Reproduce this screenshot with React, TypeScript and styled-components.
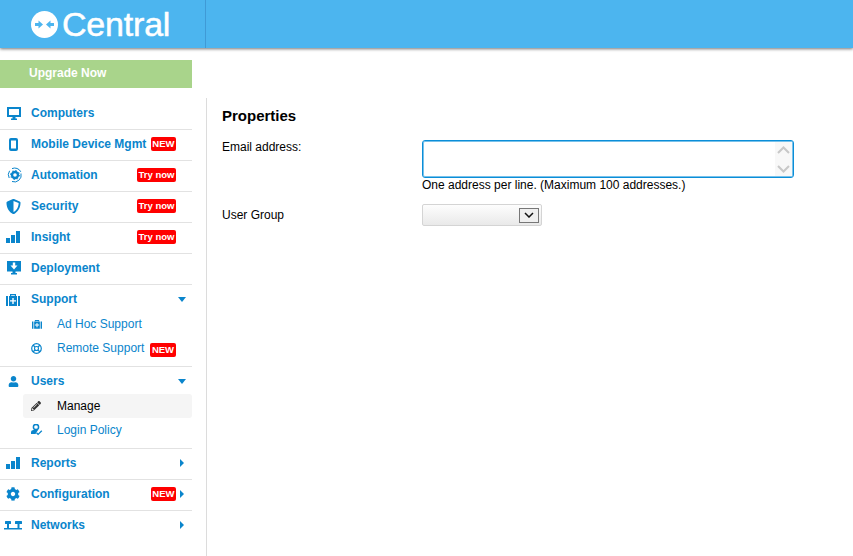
import React from "react";
import styled, { createGlobalStyle } from "styled-components";
import { FaCog, FaPencilAlt, FaShieldAlt, FaUser } from "react-icons/fa";

const GlobalStyle = createGlobalStyle`
  html, body {
    margin: 0;
    padding: 0;
    background: #fff;
    overflow: hidden;
  }
  body {
    font-family: "Liberation Sans", Arial, sans-serif;
    font-size: 12px;
    color: #000;
  }
  * { box-sizing: border-box; }
`;

const BLUE = "#0a85cc";

const Page = styled.div`
  width: 853px;
  height: 556px;
  display: flex;
  flex-direction: column;
  overflow: hidden;
`;

const Header = styled.header`
  height: 48px;
  flex: none;
  background: #4cb5ef;
  box-shadow: 0 1px 3px rgba(0, 0, 0, 0.55);
  display: flex;
  position: relative;
`;

const LogoCell = styled.div`
  width: 206px;
  height: 100%;
  border-right: 1px solid #3f9ad6;
  display: flex;
  align-items: center;
  padding-left: 31px;
  gap: 4px;
`;

const LogoText = styled.span`
  font-size: 34px;
  color: #fff;
  letter-spacing: -0.2px;
  line-height: 48px;
  -webkit-text-stroke: 0.5px #fff;
`;

const Body = styled.div`
  flex: 1;
  display: grid;
  grid-template-columns: 206px 1fr;
  grid-template-rows: auto 1fr;
  min-height: 0;
`;

const Upgrade = styled.div`
  grid-column: 1 / 3;
  margin-top: 12px;
  width: 192px;
  height: 28px;
  background: #a9d48b;
  color: #fff;
  font-weight: bold;
  line-height: 27px;
  padding-left: 29px;
`;

const Sidebar = styled.nav`
  margin-top: 11px;
  width: 192px;
`;

const Group = styled.div`
  border-bottom: 1px solid #e2e2e2;
  &:last-child { border-bottom: none; }
`;

const Row = styled.div`
  height: 30px;
  display: flex;
  align-items: center;
  padding: 0 0 2px 5px;
`;

const IconSlot = styled.span`
  width: 26px;
  height: 16px;
  flex: none;
  display: flex;
  align-items: center;
  color: ${BLUE};
`;

const Label = styled.span`
  font-weight: bold;
  color: ${BLUE};
  flex: 1;
  white-space: nowrap;
`;

const SubList = styled.div`
  margin-top: -3px;
  padding-bottom: 6px;
`;

const SubRow = styled.div<{ $active?: boolean }>`
  height: 24px;
  margin-left: 23px;
  display: flex;
  align-items: center;
  padding-left: 7px;
  border-radius: 3px;
  background: ${({ $active }) => ($active ? "#f5f5f5" : "transparent")};
`;

const SubIcon = styled.span<{ $active?: boolean }>`
  width: 27px;
  height: 14px;
  flex: none;
  display: flex;
  align-items: center;
  color: ${({ $active }) => ($active ? "#333" : BLUE)};
`;

const SubLabel = styled.span<{ $active?: boolean }>`
  color: ${({ $active }) => ($active ? "#000" : BLUE)};
  white-space: nowrap;
`;

const Badge = styled.span`
  height: 14px;
  background: #f00;
  color: #fff;
  font-size: 9.5px;
  font-weight: bold;
  line-height: 14px;
  padding: 0 1.5px;
  border-radius: 2px;
  flex: none;
  white-space: nowrap;
`;

const SubBadge = styled(Badge)`
  margin-left: 6px;
  margin-top: 3px;
`;

const Tail = styled.span`
  display: flex;
  align-items: center;
  flex: none;
`;

const CaretSlot = styled.span`
  width: 16px;
  display: flex;
  justify-content: center;
  flex: none;
  color: ${BLUE};
  padding-right: 4px;
`;

const Main = styled.main`
  margin-top: 10px;
  border-left: 1px solid #dcdcdc;
  padding: 9px 0 0 15px;
`;

const Title = styled.h2`
  margin: 0;
  font-size: 15px;
  line-height: 17px;
  font-weight: bold;
`;

const FormGrid = styled.div`
  margin-top: 16px;
  display: grid;
  grid-template-columns: 200px 372px;
  grid-template-rows: auto auto;
  row-gap: 12px;
`;

const FieldLabel = styled.label<{ $top: number }>`
  padding-top: ${({ $top }) => $top}px;
  line-height: 14px;
`;

const MailBox = styled.div`
  height: 38px;
  border: 1px solid #0a8ed8;
  box-shadow: inset 0 0 0 1px rgba(10, 142, 216, 0.55);
  border-radius: 3px;
  display: flex;
  background: #fff;
  padding: 1px;
`;

const MailInput = styled.textarea`
  flex: 1;
  border: none;
  outline: none;
  resize: none;
  overflow: hidden;
  background: transparent;
`;

const FakeScroll = styled.div`
  width: 17px;
  background: #f8f8f8;
  display: flex;
  flex-direction: column;
  justify-content: space-between;
  align-items: center;
  padding: 4px 0 3px;
`;

const Hint = styled.div`
  line-height: 14px;
`;

const SelectBox = styled.div`
  width: 120px;
  height: 22px;
  border: 1px solid #d4d4d4;
  border-radius: 2px;
  background: linear-gradient(#fdfdfd, #e9e9e9);
  display: flex;
  align-items: center;
  justify-content: flex-end;
  padding-right: 2px;
`;

const SelectArrow = styled.span`
  width: 20px;
  height: 15px;
  border: 1px solid #777;
  background: #efefef;
  display: flex;
  align-items: center;
  justify-content: center;
`;

const Down = () => (
  <svg width="8" height="5" viewBox="0 0 8 5"><path d="M0 0h8L4 5z" fill="currentColor" /></svg>
);
const Right = () => (
  <svg width="4" height="8" viewBox="0 0 4 8"><path d="M0 0l4 4-4 4z" fill="currentColor" /></svg>
);

const Icons: Record<string, React.ReactNode> = {
  computer: (
    <svg width="14" height="13" viewBox="0 0 14 13" fill="currentColor" style={{ marginLeft: 2 }}>
      <path fillRule="evenodd" d="M0 0h14v10H8.500v1.500H10V13H4v-1.500h1.500V10H0zm2 2v6h10V2z" />
    </svg>
  ),
  mobile: (
    <svg width="9" height="13" viewBox="0 0 9 13" fill="currentColor" style={{ marginLeft: 4 }}>
      <path fillRule="evenodd" d="M2 0h5a2 2 0 012 2v9a2 2 0 01-2 2H2a2 2 0 01-2-2V2a2 2 0 012-2zm0 2.500v8h5v-8z" />
    </svg>
  ),
  automation: (
    <svg width="16" height="16" viewBox="0 0 16 16" fill="none" style={{ marginLeft: 2 }}>
      <path d="M2.200 11A6.800 6.800 0 012.600 3.800M5 1.600A6.800 6.800 0 0113.800 4.800M14 6.500A6.800 6.800 0 015 14.500" stroke="currentColor" strokeWidth="1" />
      <circle cx="8" cy="8" r="3" stroke="currentColor" strokeWidth="2.400" />
      <circle cx="8" cy="8" r="4.500" stroke="currentColor" strokeWidth="1" strokeDasharray="1.500 2" />
    </svg>
  ),
  shield: <FaShieldAlt size={15} style={{ marginLeft: 1 }} />,
  bars: (
    <svg width="14" height="12" viewBox="0 0 14 12" fill="currentColor" style={{ marginLeft: 1 }}>
      <rect x="0" y="7" width="4" height="5" />
      <rect x="5" y="4" width="4" height="8" />
      <rect x="10" y="0" width="4" height="12" />
    </svg>
  ),
  deploy: (
    <svg width="14" height="14" viewBox="0 0 14 14" style={{ marginLeft: 2 }}>
      <path d="M0 0h14v10.500H8.500V12H10v1.500H4V12h1.500v-1.500H0z" fill="currentColor" />
      <path d="M5.800 1.500h2.400v3H10.500L7 8.500 3.500 4.500h2.300z" fill="#fff" />
    </svg>
  ),
  support: (
    <svg width="14" height="13" viewBox="0 0 14 13" style={{ marginLeft: 1 }}>
      <path d="M4 3V1h6v2h-1.200V2.200H5.200V3z" fill="currentColor" />
      <path d="M0 3h2v10H0zM12 3h2v10h-2zM3 3h8v10H3z" fill="currentColor" />
      <path d="M6.300 5h1.400v2.200H10v1.400H7.700V11H6.300V8.600H4V7.200h2.300z" fill="#fff" />
    </svg>
  ),
  adhoc: (
    <svg width="10" height="10" viewBox="0 0 14 13" style={{ marginLeft: 2 }}>
      <path d="M4 3V1h6v2h-1.200V2.200H5.200V3z" fill="currentColor" />
      <path d="M0 3h2v10H0zM12 3h2v10h-2zM3 3h8v10H3z" fill="currentColor" />
      <path d="M6.300 5h1.400v2.200H10v1.400H7.700V11H6.300V8.600H4V7.200h2.300z" fill="#fff" />
    </svg>
  ),
  remote: (
    <svg width="11" height="11" viewBox="0 0 11 11" fill="none" stroke="currentColor" style={{ marginLeft: 1 }}>
      <circle cx="5.500" cy="5.500" r="4.800" strokeWidth="1.200" />
      <circle cx="5.500" cy="5.500" r="2" strokeWidth="1.100" />
      <path d="M2 2l2 2M9 2L7 4M2 9l2-2M9 9L7 7" strokeWidth="1.300" />
    </svg>
  ),
  user: <FaUser size={11} style={{ marginLeft: 3 }} />,
  pencil: <FaPencilAlt size={10} style={{ marginLeft: 1 }} />,
  policy: (
    <svg width="12" height="12" viewBox="0 0 12 12" fill="currentColor" style={{ marginLeft: 1 }}>
      <circle cx="5" cy="3" r="2.600" fill="none" stroke="currentColor" strokeWidth="1.500" />
      <path d="M0 10V8.200C0 6.800 1.300 6 2.500 6H7L4.500 10z" />
      <path d="M5.500 8.800l1.600 1.600L10.800 6.800" fill="none" stroke="currentColor" strokeWidth="1.300" />
    </svg>
  ),
  gear: <FaCog size={14} style={{ marginLeft: 1 }} />,
  network: (
    <svg width="18" height="9" viewBox="0 0 18 9" fill="currentColor" style={{ marginLeft: -1 }}>
      <rect x="1" y="0" width="6" height="3" rx="0.500" />
      <rect x="11" y="0" width="7" height="3" rx="0.500" />
      <rect x="3" y="3" width="2" height="4" />
      <rect x="13.500" y="3" width="2" height="4" />
      <rect x="0" y="7" width="18" height="1.500" />
    </svg>
  ),
};

type Item = {
  icon: string;
  label: string;
  badge?: string;
  caret?: "down" | "right";
  subs?: { icon: string; label: string; badge?: string; active?: boolean }[];
};

const items: Item[] = [
  { icon: "computer", label: "Computers" },
  { icon: "mobile", label: "Mobile Device Mgmt", badge: "NEW" },
  { icon: "automation", label: "Automation", badge: "Try now" },
  { icon: "shield", label: "Security", badge: "Try now" },
  { icon: "bars", label: "Insight", badge: "Try now" },
  { icon: "deploy", label: "Deployment" },
  {
    icon: "support",
    label: "Support",
    caret: "down",
    subs: [
      { icon: "adhoc", label: "Ad Hoc Support" },
      { icon: "remote", label: "Remote Support", badge: "NEW" },
    ],
  },
  {
    icon: "user",
    label: "Users",
    caret: "down",
    subs: [
      { icon: "pencil", label: "Manage", active: true },
      { icon: "policy", label: "Login Policy" },
    ],
  },
  { icon: "bars", label: "Reports", caret: "right" },
  { icon: "gear", label: "Configuration", badge: "NEW", caret: "right" },
  { icon: "network", label: "Networks", caret: "right" },
];

const App = () => (
  <Page>
    <GlobalStyle />
    <Header>
      <LogoCell>
        <svg width="27" height="27" viewBox="0 0 27 27">
          <circle cx="13.500" cy="13.500" r="13.500" fill="#fff" />
          <path d="M12 13.500L7.500 9.500v2.500H4v3h3.500v2.500zM15 13.500l4.500-4v2.500H23v3h-3.500v2.500z" fill="#4cb5ef" />
        </svg>
        <LogoText>Central</LogoText>
      </LogoCell>
    </Header>
    <Body>
      <Upgrade>Upgrade Now</Upgrade>
      <Sidebar>
        {items.map((item) => (
          <Group key={item.label}>
            <Row>
              <IconSlot>{Icons[item.icon]}</IconSlot>
              <Label>{item.label}</Label>
              <Tail>
                {item.badge && <Badge>{item.badge}</Badge>}
                {item.caret && (
                  <CaretSlot>{item.caret === "down" ? <Down /> : <Right />}</CaretSlot>
                )}
                {!item.caret && item.badge && <CaretSlot />}
              </Tail>
            </Row>
            {item.subs && (
              <SubList>
                {item.subs.map((sub) => (
                  <SubRow key={sub.label} $active={sub.active}>
                    <SubIcon $active={sub.active}>{Icons[sub.icon]}</SubIcon>
                    <SubLabel $active={sub.active}>{sub.label}</SubLabel>
                    {sub.badge && <SubBadge>{sub.badge}</SubBadge>}
                  </SubRow>
                ))}
              </SubList>
            )}
          </Group>
        ))}
      </Sidebar>
      <Main>
        <Title>Properties</Title>
        <FormGrid>
          <FieldLabel $top={0}>Email address:</FieldLabel>
          <div>
            <MailBox>
              <MailInput />
              <FakeScroll>
                <svg width="13" height="8" viewBox="0 0 13 8" fill="none">
                  <path d="M1 7l5.500-5.500L12 7" stroke="#c8c8c8" strokeWidth="2" />
                </svg>
                <svg width="13" height="8" viewBox="0 0 13 8" fill="none">
                  <path d="M1 1l5.500 5.500L12 1" stroke="#c8c8c8" strokeWidth="2" />
                </svg>
              </FakeScroll>
            </MailBox>
            <Hint>One address per line. (Maximum 100 addresses.)</Hint>
          </div>
          <FieldLabel $top={4}>User Group</FieldLabel>
          <SelectBox>
            <SelectArrow>
              <svg width="10" height="6" viewBox="0 0 10 6" fill="none">
                <path d="M1 1l4 4 4-4" stroke="#111" strokeWidth="1.500" />
              </svg>
            </SelectArrow>
          </SelectBox>
        </FormGrid>
      </Main>
    </Body>
  </Page>
);

export default App;
